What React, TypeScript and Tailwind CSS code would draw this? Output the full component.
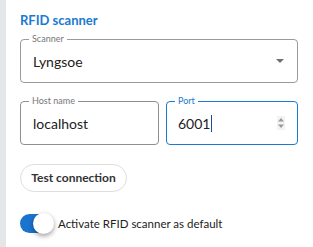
import React from "react";

export default function App() {
  const font = { fontFamily: '"Lato", "Noto Sans", sans-serif' };
  return (
    <div className="flex w-[313px] h-[247px] bg-white overflow-hidden" style={font}>
      <div className="w-[6px] h-full bg-[#e4e6e8] shrink-0" />
      <div className="flex flex-col pl-[14px] pr-[15px] pt-[12px] w-full">
        <div className="text-[13px] leading-[16px] font-bold text-[#1a7ad2] h-[16px]">RFID scanner</div>

        <div className="relative mt-[11px] h-[44px] border border-[#9b9b9b] rounded-[4px] flex items-center pl-[12px] pr-[13px]">
          <span className="absolute -top-[7px] left-[8px] bg-white px-[3px] text-[9px] leading-[12px] text-[#777]">Scanner</span>
          <span className="text-[14px] text-[#222] flex-1">Lyngsoe</span>
          <svg width="8" height="4" viewBox="0 0 8 4"><path d="M0 0h8L4 4z" fill="#6e6e6e" /></svg>
        </div>

        <div className="flex gap-[7px] mt-[18px]">
          <div className="relative h-[44px] w-[139px] border border-[#8f8f8f] rounded-[4px] flex items-center pl-[12px]">
            <span className="absolute -top-[7px] left-[8px] bg-white px-[3px] text-[9px] leading-[12px] text-[#777]">Host name</span>
            <span className="text-[14px] text-[#222]">localhost</span>
          </div>
          <div className="relative h-[44px] flex-1 border-[1.5px] border-[#1a7ad2] rounded-[4px] flex items-center pl-[11px] pr-[12px]">
            <span className="absolute -top-[7px] left-[8px] bg-white px-[3px] text-[9px] leading-[12px] text-[#1a7ad2]">Port</span>
            <span className="text-[14px] text-[#222] flex-1 flex items-center">6001<span className="inline-block w-[1px] h-[17px] bg-[#1a4fa0] ml-[1px]" /></span>
            <svg width="8" height="14" viewBox="0 0 8 14">
              <rect x="0" y="0" width="8" height="14" fill="#f3f3f3" />
              <path d="M1 5.5L4 2l3 3.5z" fill="#9a9a9a" />
              <path d="M1 8.5L4 12l3-3.5z" fill="#9a9a9a" />
            </svg>
          </div>
        </div>

        <div className="mt-[19px]">
          <button className="h-[28px] w-[107px] rounded-full border border-[#dedede] text-[12px] font-bold text-[#333] bg-white">Test connection</button>
        </div>

        <div className="flex items-center mt-[22px] gap-[5px]">
          <div className="relative w-[33px] h-[19px] rounded-full bg-[#1a73cf]">
            <div className="absolute right-[-1px] top-[-1px] w-[21px] h-[21px] rounded-full bg-white shadow-[0_2px_5px_rgba(0,0,0,0.4)]" />
          </div>
          <span className="text-[11.5px] text-[#222]">Activate RFID scanner as default</span>
        </div>
      </div>
    </div>
  );
}
